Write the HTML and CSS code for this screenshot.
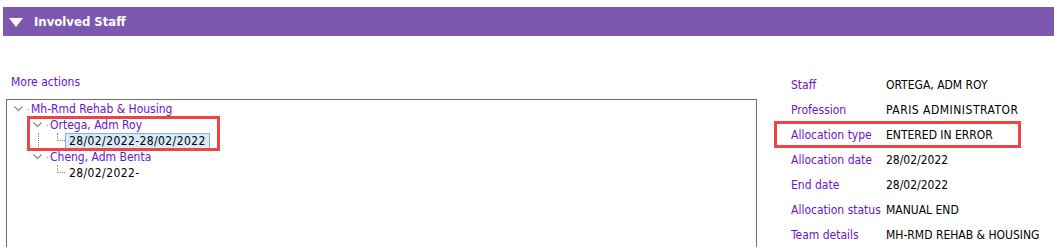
FILE: index.html
```html
<!DOCTYPE html>
<html>
<head>
<meta charset="utf-8">
<link rel="stylesheet" href="styles.css">
</head>
<body>
<div class="header">
  <svg class="tri" width="14" height="9" viewBox="0 0 14 9"><polygon points="0,0 14,0 7,9" fill="#fff"/></svg>
  <span class="title">Involved Staff</span>
</div>
<div class="content">
  <div class="left">
    <div class="more">More actions</div>
    <div class="tree">
      <div class="row lvl0">
        <svg class="chev" width="9" height="6" viewBox="0 0 9 6"><polyline points="0.5,0.5 4.5,4.5 8.5,0.5" fill="none" stroke="#8c8c8c" stroke-width="1.3"/></svg>
        <span class="dash"></span>
        <span class="lbl">Mh-Rmd Rehab &amp; Housing</span>
      </div>
      <div class="row lvl1">
        <svg class="chev" width="9" height="6" viewBox="0 0 9 6"><polyline points="0.5,0.5 4.5,4.5 8.5,0.5" fill="none" stroke="#8c8c8c" stroke-width="1.3"/></svg>
        <span class="dash"></span>
        <span class="lbl">Ortega, Adm Roy</span>
      </div>
      <div class="row lvl2">
        <span class="vline"></span>
        <span class="elbow"></span>
        <span class="leaf selected">28/02/2022-28/02/2022</span>
      </div>
      <div class="row lvl1">
        <svg class="chev" width="9" height="6" viewBox="0 0 9 6"><polyline points="0.5,0.5 4.5,4.5 8.5,0.5" fill="none" stroke="#8c8c8c" stroke-width="1.3"/></svg>
        <span class="dash"></span>
        <span class="lbl">Cheng, Adm Benta</span>
      </div>
      <div class="row lvl2">
        <span class="vline none"></span>
        <span class="elbow"></span>
        <span class="leaf">28/02/2022-</span>
      </div>
      <div class="mark mark-tree"></div>
    </div>
  </div>
  <div class="details">
    <div class="drow"><span class="dl">Staff</span><span class="dv">ORTEGA, ADM ROY</span></div>
    <div class="drow"><span class="dl">Profession</span><span class="dv wide">PARIS ADMINISTRATOR</span></div>
    <div class="drow"><span class="dl">Allocation type</span><span class="dv">ENTERED IN ERROR</span></div>
    <div class="drow"><span class="dl">Allocation date</span><span class="dv">28/02/2022</span></div>
    <div class="drow"><span class="dl">End date</span><span class="dv">28/02/2022</span></div>
    <div class="drow"><span class="dl">Allocation status</span><span class="dv">MANUAL END</span></div>
    <div class="drow"><span class="dl">Team details</span><span class="dv">MH-RMD REHAB &amp; HOUSING</span></div>
    <div class="mark mark-details"></div>
  </div>
</div>
</body>
</html>
```
FILE: styles.css
```css
html, body {
  margin: 0;
  padding: 0;
  background: #fff;
  overflow: hidden;
}
body {
  font-family: "DejaVu Sans Condensed", "DejaVu Sans", sans-serif;
  font-size: 12px;
  color: #000;
  width: 1054px;
  height: 248px;
}
.header {
  margin: 7px 0 0 3px;
  height: 29px;
  background: #7d58b0;
  display: flex;
  align-items: center;
  padding-left: 6px;
}
.tri {
  display: block;
  margin-top: 1px;
}
.title {
  margin-left: 11px;
  color: #fff;
  font-weight: bold;
  font-size: 13px;
}
.content {
  display: flex;
  align-items: flex-start;
}
.left {
  margin-left: 6px;
  width: 751px;
  display: flex;
  flex-direction: column;
}
.more {
  color: #6b14c8;
  margin: 39px 0 0 5px;
  height: 15px;
  line-height: 15px;
}
.tree {
  position: relative;
  margin-top: 9px;
  border: 1px solid #6e6e6e;
  border-bottom: none;
  height: 148px;
  padding-top: 1px;
  box-sizing: border-box;
}
.row {
  display: flex;
  align-items: center;
  height: 16px;
  line-height: 16px;
  white-space: nowrap;
}
.lvl0 { padding-left: 7px; }
.lvl1 { padding-left: 26px; }
.lvl2 { padding-left: 31px; align-items: stretch; }
.chev { display: block; flex: none; }
.dash {
  width: 1px;
  margin: 0 2px 0 5px;
  border-top: 1px dotted #8c8c8c;
  height: 0;
}
.lbl { color: #6b14c8; }
.vline {
  width: 19px;
  border-left: 1px dotted #8c8c8c;
  box-sizing: border-box;
}
.vline.none { border-left-color: transparent; }
.elbow {
  width: 8px;
  height: 8px;
  box-sizing: border-box;
  border-left: 1px dotted #8c8c8c;
  border-bottom: 1px dotted #8c8c8c;
}
.leaf {
  padding: 0 3px;
  border: 1px solid transparent;
  line-height: 15px;
  letter-spacing: 0.4px;
}
.leaf.selected {
  background: #d8eafa;
  border-color: #7fb2e3;
}
.details {
  position: relative;
  margin-left: 34px;
  margin-top: 42px;
}
.drow {
  display: flex;
  height: 25px;
  line-height: 14px;
}
.dl {
  width: 95px;
  color: #6b14c8;
}
.dv { color: #000; }
.dv.wide { letter-spacing: 0.5px; }
.mark {
  position: absolute;
  border: 3px solid #ee4444;
  box-sizing: border-box;
}
.mark-tree {
  left: 20px;
  top: 16px;
  width: 193px;
  height: 35px;
}
.mark-details {
  left: -17px;
  top: 43px;
  width: 247px;
  height: 27px;
}
```
